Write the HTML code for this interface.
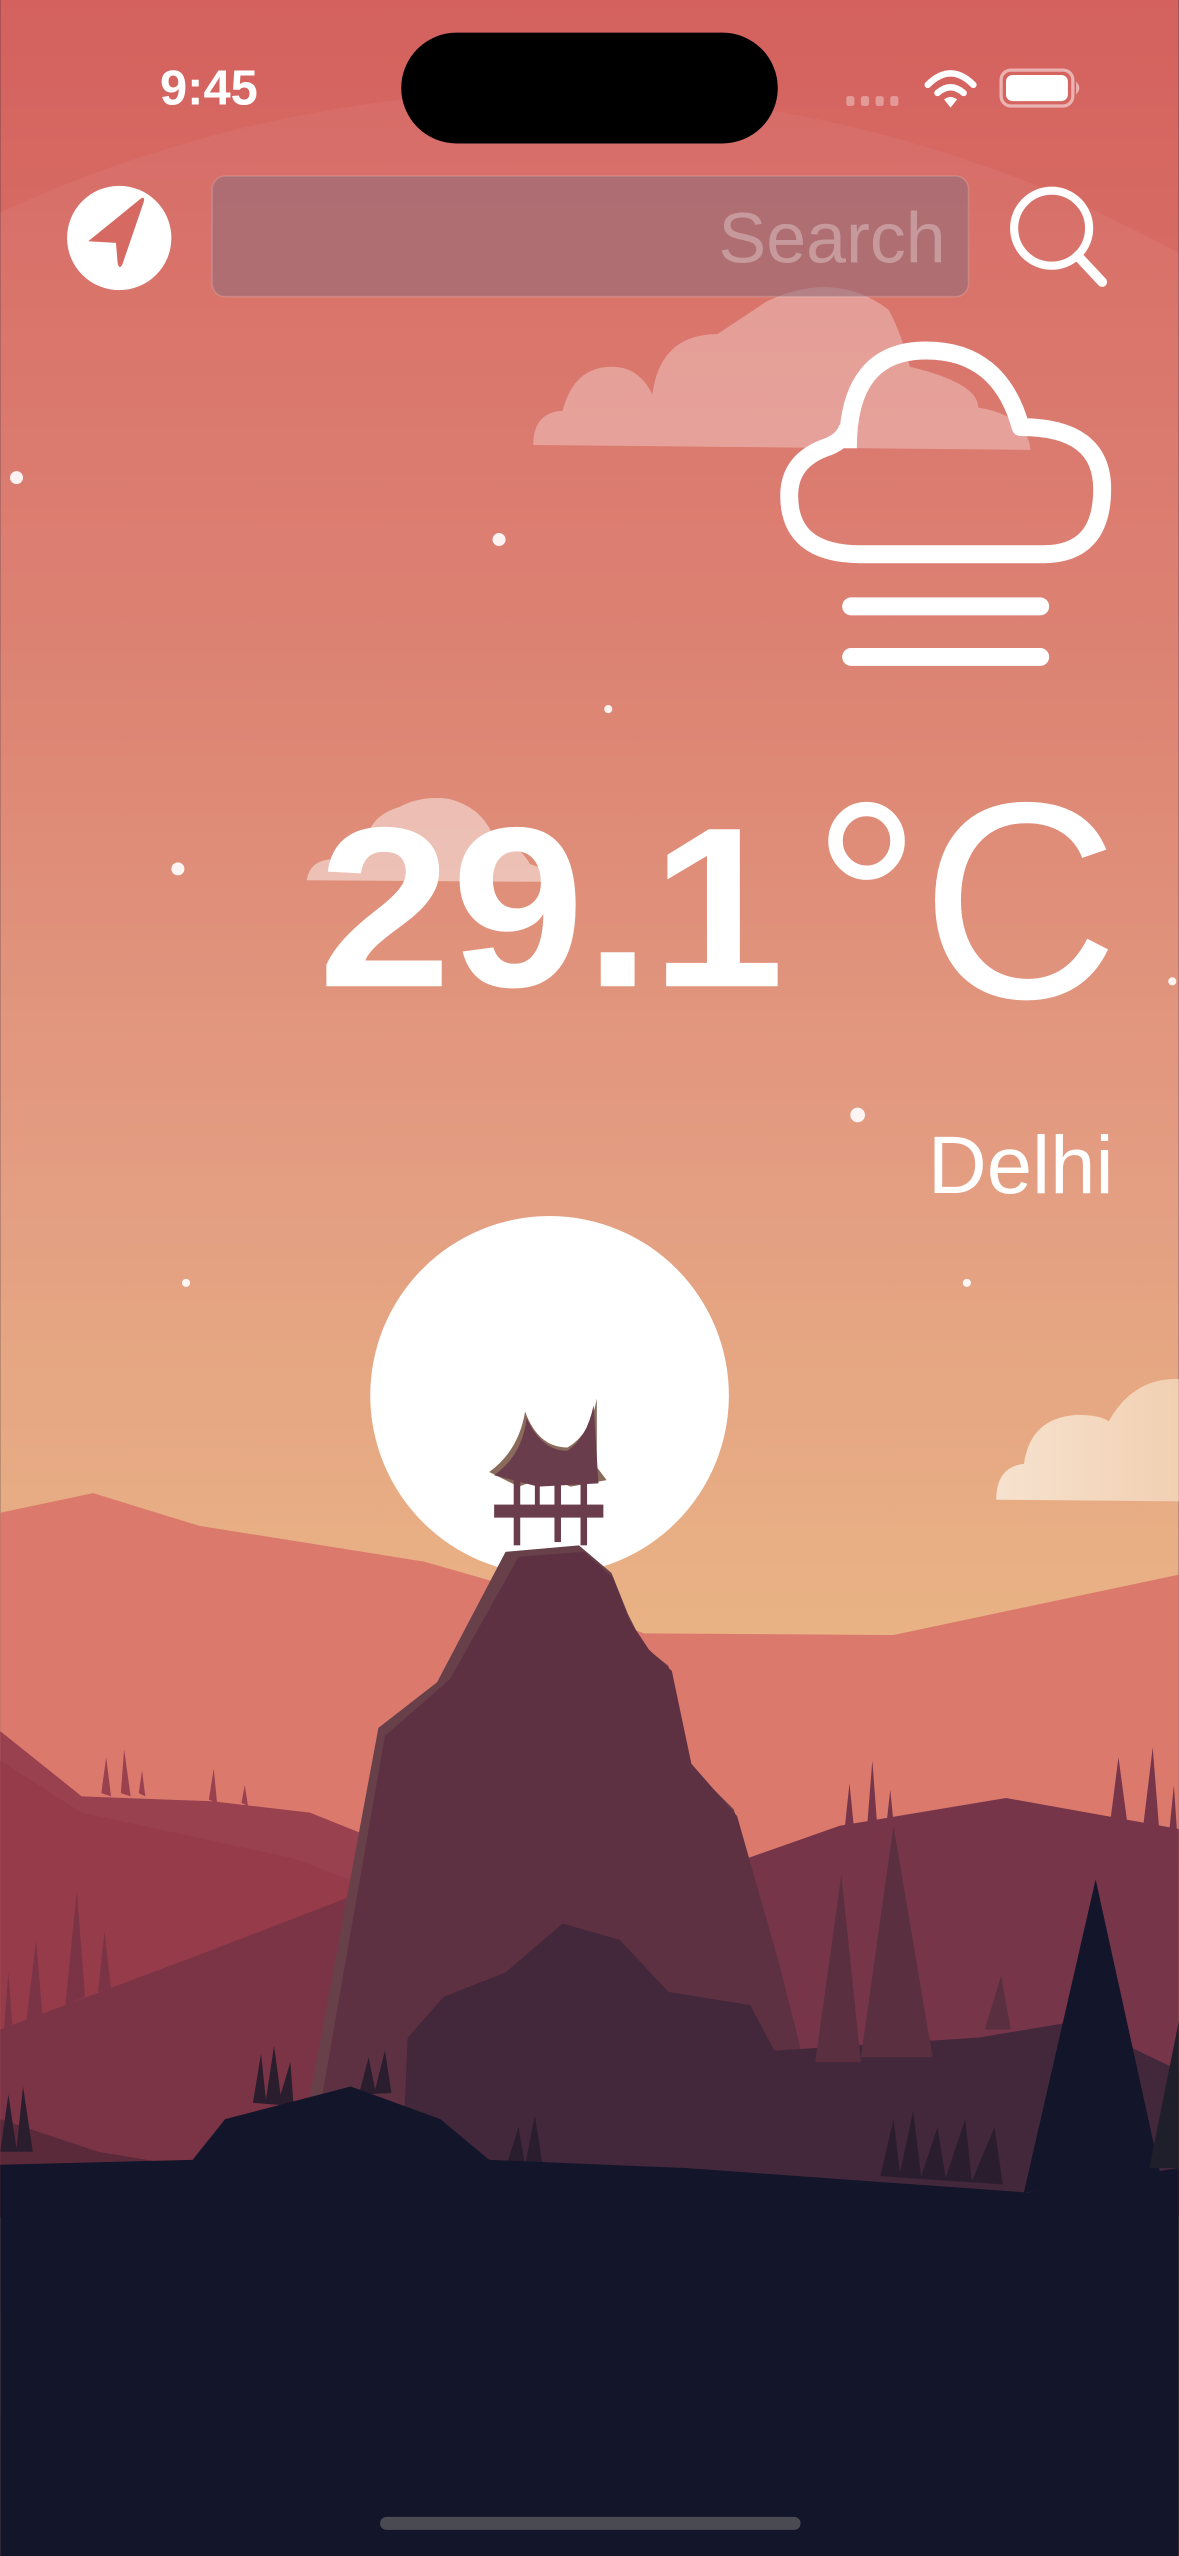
<!DOCTYPE html>
<html><head><meta charset="utf-8"><style>
html,body{margin:0;padding:0;background:#13152a;width:1179px;height:2556px;overflow:hidden}
svg{display:block}
text{font-family:"Liberation Sans",sans-serif}
</style></head><body>
<svg width="1179" height="2556" viewBox="0 0 723 1568" xmlns="http://www.w3.org/2000/svg">
<defs>
<linearGradient id="sky" x1="0" y1="0" x2="0" y2="1">
<stop offset="0" stop-color="#d4615e"/>
<stop offset="0.25" stop-color="#db7b6b"/>
<stop offset="0.45" stop-color="#e2977a"/>
<stop offset="0.65" stop-color="#e8b07e"/>
<stop offset="1" stop-color="#e9b37a"/>
</linearGradient>
<linearGradient id="cl2" x1="0" y1="0" x2="1" y2="0">
<stop offset="0" stop-color="#f6e2cf"/><stop offset="1" stop-color="#f2d0b2"/>
</linearGradient>
</defs>
<rect width="723" height="1568" fill="url(#sky)"/>
<g fill="#ffffff" opacity="0.05">
<circle cx="337" cy="856" r="800"/><circle cx="337" cy="856" r="620"/><circle cx="337" cy="856" r="500"/>
<circle cx="337" cy="856" r="380"/><circle cx="337" cy="856" r="290"/><circle cx="337" cy="856" r="215"/><circle cx="337" cy="856" r="160"/>
</g>
<g fill="#fff" opacity="0.9">
<circle cx="10" cy="293" r="4"/><circle cx="306" cy="331" r="4"/><circle cx="373" cy="435" r="2.5"/>
<circle cx="109" cy="533" r="4"/><circle cx="526" cy="684" r="4.5"/><circle cx="114" cy="787" r="2.5"/>
<circle cx="593" cy="787" r="2.5"/><circle cx="719" cy="602" r="2.5"/>
</g>
<path d="M327 273 Q327 253 345 252 Q352 225 375 225 Q392 225 400 242 Q405 205 440 205 Q455 195 470 185 Q512 165 545 190 Q553 205 558 225 Q600 235 600 250 Q630 255 632 276 Z" fill="#ffffff" opacity="0.3"/>
<path d="M188 540 Q190 527 205 527 Q210 515 225 514 Q228 500 245 495 Q258 488 275 490 Q295 495 302 512 Q318 518 325 530 Q340 535 340 541 Z" fill="#ffffff" opacity="0.45"/>
<path d="M611 920 Q611 900 628 898 Q632 870 660 868 Q675 868 680 872 Q695 845 723 846 L723 921 Z" fill="url(#cl2)"/>
<circle cx="337" cy="856" r="110" fill="#fff"/>
<path d="M0 928 L57 916 L122 936 L260 958 L330 978 L395 1002 L548 1003 L723 966 L723 1360 L0 1360 Z" fill="#db7a6c"/>
<path d="M0 1062 L50 1102 L130 1105 L190 1112 L260 1140 L280 1360 L0 1360 Z" fill="#9a4150"/>
<path d="M0 1080 L50 1112 L180 1140 L260 1170 L280 1360 L0 1360 Z" fill="#963b49"/>
<path d="M0 1245 L120 1200 L250 1150 L280 1360 L0 1360 Z" fill="#7a3446"/>
<path d="M400 1160 L430 1150 L515 1120 L617 1103 L723 1122 L723 1360 L400 1360 Z" fill="#77354a"/>
<g fill="#9a4150"><path d="M62 1100 L65 1078 L68 1102Z M74 1100 L76 1073 L80 1102Z M85 1100 L87 1086 L89 1102Z M128 1104 L131 1085 L133 1106Z M148 1106 L150 1095 L152 1108Z"/></g>
<g fill="#77354a"><path d="M518 1122 L521 1094 L524 1124Z M532 1118 L535 1080 L538 1120Z M544 1116 L546 1098 L548 1118Z M680 1125 L686 1078 L693 1130Z M700 1130 L707 1072 L712 1135Z M716 1135 L720 1095 L723 1140Z"/></g>
<g fill="#7a3446"><path d="M40 1230 L47 1160 L52 1225Z M60 1222 L64 1185 L68 1220Z M16 1240 L22 1190 L26 1238Z M2 1250 L5 1210 L8 1250Z"/></g>
<path d="M180 1340 L232 1060 L268 1032 L310 952 L355 948 L375 965 L385 990 L395 1010 L410 1022 L420 1080 L450 1110 L475 1200 L510 1340 Z" fill="#67404a"/>
<path d="M188 1340 L236 1065 L276 1030 L318 955 L358 952 L376 968 L386 994 L398 1012 L412 1025 L424 1082 L452 1114 L478 1205 L512 1340 Z" fill="#5e3142"/>
<g fill="#6a3d4d">
<path d="M300 903 Q318 890 322 866 Q330 888 348 888 Q362 880 366 858 L366 900 L372 908 L350 912 L335 906 L318 912 Z" fill="#8a6a5a"/>
<path d="M303 905 Q320 893 323 870 Q332 890 348 890 Q360 882 364 862 L367 910 L330 912 Z"/>
<rect x="303" y="923" width="67" height="8"/>
<rect x="315" y="908" width="4" height="40"/><rect x="340" y="908" width="4" height="38"/><rect x="356" y="908" width="4" height="40"/><rect x="328" y="908" width="3" height="18"/>
</g>
<path d="M245 1360 L250 1250 L272 1225 L310 1210 L345 1180 L380 1190 L410 1222 L460 1230 L475 1258 L600 1250 L660 1240 L723 1270 L723 1360 Z" fill="#43273a"/>
<path d="M0 1300 L60 1320 L120 1330 L120 1360 L0 1360 Z" fill="#5a2a3a"/>
<path d="M500 1265 L516 1150 L528 1265 Z" fill="#5a3040"/>
<path d="M528 1262 L548 1120 L572 1262 Z" fill="#5a3040"/>
<path d="M604 1245 L614 1212 L620 1245 Z" fill="#5a3040"/>
<g fill="#2a1e2e">
<path d="M155 1290 L160 1260 L163 1288 L168 1255 L172 1285 L178 1265 L180 1292Z"/>
<path d="M220 1285 L226 1262 L230 1282 L236 1258 L240 1284Z"/>
<path d="M310 1330 L318 1305 L322 1328 L328 1298 L333 1330Z"/>
<path d="M540 1335 L548 1300 L552 1333 L560 1295 L565 1335 L575 1305 L580 1336 L592 1300 L596 1338 L610 1305 L615 1340Z"/>
<path d="M0 1320 L5 1285 L10 1318 L14 1280 L20 1320Z"/>
</g>
<path d="M628 1345 L672 1153 L712 1335 Z" fill="#13152a"/>
<path d="M705 1330 L723 1240 L723 1330Z" fill="#1e1f2a"/>
<path d="M0 1328 L118 1325 L138 1300 L215 1280 L270 1300 L300 1325 L420 1330 L630 1345 L723 1330 L723 1568 L0 1568 Z" fill="#13152a"/>
<rect x="233" y="1544" width="258" height="8" rx="4" fill="#4a4a52"/>
<text x="98" y="64" font-size="30" font-weight="bold" fill="#fff">9:45</text>
<rect x="246" y="20" width="231" height="68" rx="34" fill="#000"/>
<g fill="#fff" opacity="0.35"><rect x="519" y="59" width="5" height="6" rx="1.5"/><rect x="528" y="59" width="5" height="6" rx="1.5"/><rect x="537" y="59" width="5" height="6" rx="1.5"/><rect x="546" y="59" width="5" height="6" rx="1.5"/></g>
<g fill="none" stroke="#fff" stroke-width="4" stroke-linecap="round">
<path d="M569 52 Q583 38 597 52"/><path d="M575 57 Q583 50 591 57"/></g>
<path d="M579 61 L583 66 L587 61 Q583 58 579 61Z" fill="#fff"/>
<rect x="614" y="43" width="44" height="22" rx="6" fill="none" stroke="#fff" stroke-opacity="0.5" stroke-width="2"/>
<rect x="617" y="46" width="38" height="16" rx="4" fill="#fff"/>
<path d="M660 50 Q664 54 660 58Z" fill="#fff" opacity="0.5"/>
<circle cx="73" cy="146" r="32" fill="#fff"/>
<path d="M54 148 L86 122 Q89 120 88 124 L75 162 Q73 166 72 161 L71 149 Z" fill="#d66a62"/>
<rect x="130" y="108" width="464" height="74" rx="8" fill="#8c6c78" fill-opacity="0.55" stroke="#ffffff" stroke-opacity="0.15" stroke-width="1"/>
<text x="580" y="161" font-size="44" text-anchor="end" fill="#fff" fill-opacity="0.3">Search</text>
<circle cx="645" cy="140" r="23" fill="none" stroke="#fff" stroke-width="5"/>
<path d="M661 157 L676 173" stroke="#fff" stroke-width="6" stroke-linecap="round"/>
<path d="M520 275 Q520 215 568 215 Q613 215 626 262 Q676 262 676 300 Q676 340 640 340 L528 340 Q484 340 484 304 Q484 282 508 274 Q518 270 520 262" fill="none" stroke="#fff" stroke-width="11" stroke-linejoin="round"/>
<path d="M522 372 L638 372 M522 403 L638 403" stroke="#fff" stroke-width="11" stroke-linecap="round"/>
<text x="195" y="605" font-size="140" font-weight="bold" fill="#fff" textLength="286" lengthAdjust="spacingAndGlyphs">29.1</text>
<text x="498" y="612" font-size="172" fill="#fff" textLength="188" lengthAdjust="spacingAndGlyphs">°C</text>
<text x="683" y="732" font-size="50" text-anchor="end" fill="#fff">Delhi</text>
</svg>
</body></html>
